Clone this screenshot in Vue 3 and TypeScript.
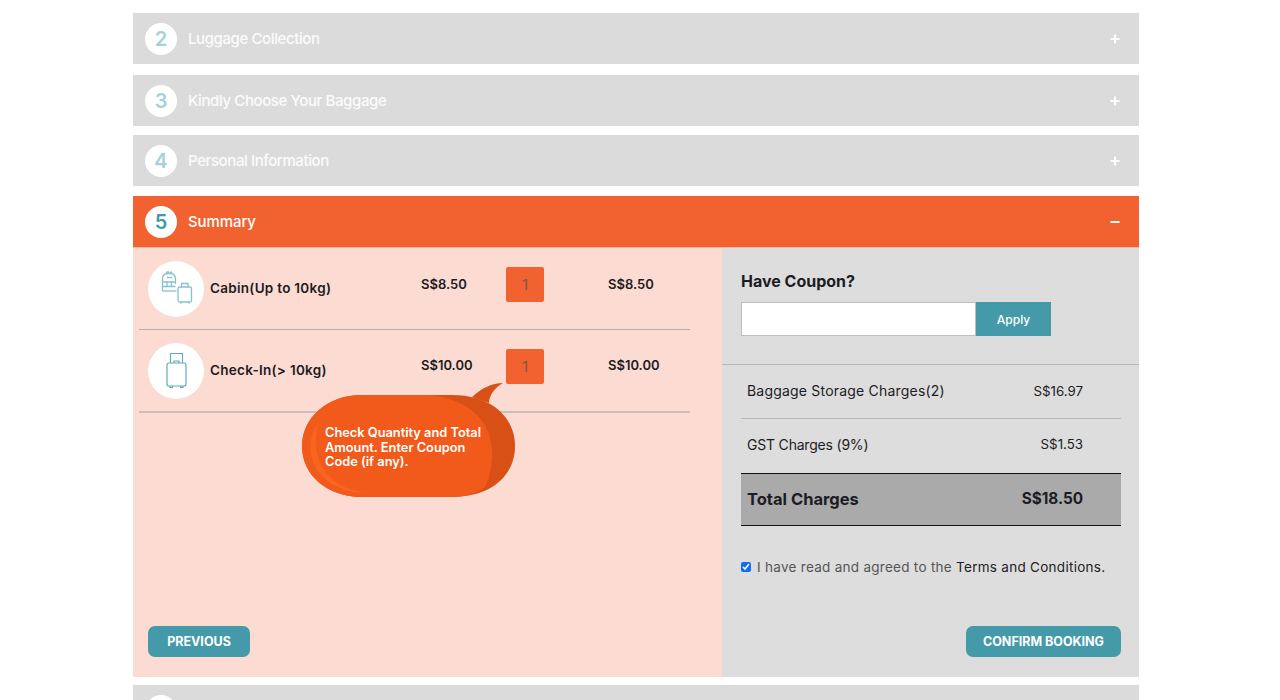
<script setup lang="ts">
interface Step { n: number; title: string; active?: boolean }
const topSteps: Step[] = [
  { n: 2, title: 'Luggage Collection' },
  { n: 3, title: 'Kindly Choose Your Baggage' },
  { n: 4, title: 'Personal Information' },
  { n: 5, title: 'Summary', active: true },
]
const items = [
  { name: 'Cabin(Up to 10kg)', price: 'S$8.50', qty: 1, total: 'S$8.50', kind: 'cabin' },
  { name: 'Check-In(> 10kg)', price: 'S$10.00', qty: 1, total: 'S$10.00', kind: 'check' },
]
</script>

<template>
  <div class="page">
    <section v-for="s in topSteps" :key="s.n" class="step" :class="{ active: s.active }">
      <span class="num">{{ s.n }}</span>
      <span class="title">{{ s.title }}</span>
      <svg class="toggle" width="10" height="10" viewBox="0 0 10 10">
        <rect x="0.5" y="4" width="9" height="2" fill="#fff" />
        <rect v-if="!s.active" x="4" y="0.5" width="2" height="9" fill="#fff" />
      </svg>
    </section>

    <div class="panel">
      <div class="left">
        <div v-for="it in items" :key="it.name" class="row">
          <span class="thumb">
            <svg v-if="it.kind === 'cabin'" width="56" height="56" viewBox="0 0 56 56" fill="none" stroke="#86c2ca" stroke-width="1.300">
              <path d="M14.500 30V18c0-3 2-5 4.500-5.500h4c3 .5 4.500 2.500 4.500 5.500v5" />
              <path d="M14.500 30h14" />
              <path d="M18 13l1-2h1.500l.5 1.500M22 12.500l1-1.500 1 1.500" />
              <path d="M14.500 21h13M14.500 25.500h13M19 21v4.500M23.500 21v4.500" />
              <path d="M19 16.500h5" />
              <rect x="30" y="26" width="13.500" height="15" rx="1.800" />
              <path d="M33.500 26v-3.500h6.500V26" />
              <path d="M33 41v1.800M41 41v1.800" />
            </svg>
            <svg v-else width="56" height="56" viewBox="0 0 56 56" fill="none" stroke="#5fadb9" stroke-width="1.200">
              <rect x="19" y="20" width="19" height="23" rx="2" />
              <path d="M22.500 20V10.500h12V20" />
              <path d="M26 20v-2h5v2" />
              <path d="M22 43v1.500h2.500V43M32.500 43v1.500H35V43" />
            </svg>
          </span>
          <span class="name">{{ it.name }}</span>
          <span class="price">{{ it.price }}</span>
          <span class="qty">{{ it.qty }}</span>
          <span class="total">{{ it.total }}</span>
        </div>

        <div class="bubble">
          <svg width="213" height="114" viewBox="0 0 213 114">
            <path d="M170 14C180 5 190 0 201 0C192 5 187 13 187 20Z" fill="#d95016" />
            <path d="M60 12H150C190 12 213 35 213 63C213 92 190 114 150 114H60C25 114 0 92 0 63C0 35 25 12 60 12Z" fill="#d95016" />
            <path d="M60 12H125C168 15 192 40 190 75C189 88 187 98 182 105C172 111 162 114 150 114H60C25 114 0 92 0 63C0 35 25 12 60 12Z" fill="#f15a1a" />
            <path d="M17 39C6 52 5 75 18 91C30 105 48 110 66 110C47 108 28 100 19 82C13 68 12 52 17 39Z" fill="#f8651f" />
          </svg>
          <p class="bubble-text">Check Quantity and Total Amount. Enter Coupon Code (if any).</p>
        </div>

        <button class="btn prev" type="button">PREVIOUS</button>
      </div>

      <div class="right">
        <div class="coupon">
          <h3>Have Coupon?</h3>
          <div class="coupon-form">
            <input type="text" aria-label="Coupon code" />
            <button type="button">Apply</button>
          </div>
        </div>

        <div class="charges">
          <div class="charge bordered"><span>Baggage Storage Charges(2)</span><span>S$16.97</span></div>
          <div class="charge gst"><span>GST Charges (9%)</span><span>S$1.53</span></div>
          <div class="charge grand"><span>Total Charges</span><span>S$18.50</span></div>
        </div>

        <label class="agree">
          <input type="checkbox" checked />
          <span>I have read and agreed to the <b>Terms and Conditions.</b></span>
        </label>

        <button class="btn confirm" type="button">CONFIRM BOOKING</button>
      </div>
    </div>

    <section class="step next">
      <span class="num"></span>
    </section>
  </div>
</template>

<style>
html, body { margin: 0; background: #fff; overflow: hidden; }
</style>

<style scoped>
.page {
  box-sizing: border-box;
  width: 1006px;
  height: 700px;
  margin: 0 auto 0 133px;
  padding-top: 13px;
  overflow: hidden;
  font-family: Inter, "Liberation Sans", sans-serif;
  color: #1c1c24;
}
.step {
  box-sizing: border-box;
  display: flex;
  align-items: center;
  height: 51px;
  margin-bottom: 10px;
  padding: 0 19px 0 12px;
  background: #dbdbdb;
  color: #fbfbfb;
}
.step:nth-child(1) { margin-bottom: 11px; }
.step:nth-child(2) { margin-bottom: 9px; }
.step.active {
  height: 52px;
  margin-bottom: 0;
  border-bottom: 1px solid #f6b9a3;
  background: #f26230;
  color: #fff;
}
.num {
  flex: none;
  width: 32px;
  height: 32px;
  border-radius: 50%;
  background: #fff;
  color: #a3d2d9;
  font-size: 20px;
  font-weight: 600;
  line-height: 32px;
  text-align: center;
}
.active .num { color: #449aa8; }
.title { margin-left: 11px; font-size: 15px; font-weight: 500; letter-spacing: -0.4px; }
.active .title { letter-spacing: -0.1px; }
.toggle { margin-left: auto; margin-top: 1px; }

.panel {
  display: grid;
  grid-template-columns: 589px 417px;
  height: 429px;
  margin-bottom: 8px;
}
.left {
  position: relative;
  display: flex;
  flex-direction: column;
  padding-left: 6px;
  background: #fcdbd2;
}
.row {
  box-sizing: border-box;
  display: grid;
  grid-template-columns: 62px 211px 85px 102px 1fr;
  align-items: center;
  width: 551px;
  height: 82px;
  padding: 13px 0 12px 9px;
  border-bottom: 1px solid #aab6b6;
  font-size: 13px;
  font-weight: 600;
}
.row:nth-child(2) { height: 83px; padding-bottom: 12px; border-bottom: 2px solid #c9c0bc; }
.row:nth-child(2) .price, .row:nth-child(2) .total { margin-top: 13px; }
.thumb {
  width: 56px;
  height: 56px;
  border-radius: 50%;
  background: #fff;
}
.thumb svg { display: block; }
.name { font-size: 13.500px; letter-spacing: 0.28px; margin-top: -3px; }
.price, .total { align-self: start; margin-top: 14px; line-height: 18px; }
.qty {
  box-sizing: border-box;
  align-self: start;
  width: 38px;
  height: 35px;
  margin-top: 6px;
  border-radius: 2px;
  background: #f26230;
  color: #7a5a48;
  font-size: 15px;
  font-weight: 400;
  line-height: 35px;
  text-align: center;
}
.bubble {
  position: absolute;
  left: 169px;
  top: 135px;
  width: 213px;
  height: 114px;
}
.bubble svg { display: block; }
.bubble-text {
  position: absolute;
  left: 23px;
  top: 43px;
  width: 162px;
  margin: 0;
  color: #fff;
  font-size: 12.800px;
  font-weight: 600;
  line-height: 14.500px;
}
.btn {
  box-sizing: border-box;
  height: 31px;
  border: 0;
  border-radius: 7px;
  background: #449aa8;
  color: #fff;
  font-family: inherit;
  font-size: 12.500px;
  font-weight: 700;
}
.prev { width: 102px; margin-top: auto; margin-bottom: 20px; margin-left: 9px; }

.right {
  display: flex;
  flex-direction: column;
  background: #dddddd;
}
.coupon {
  box-sizing: border-box;
  height: 117px;
  padding: 21px 19px 0;
  border-bottom: 1px solid #b8b8b8;
}
.coupon h3 { margin: 0; font-size: 16px; font-weight: 700; line-height: 24px; }
.coupon-form { display: flex; margin-top: 9px; }
.coupon-form input {
  box-sizing: border-box;
  width: 235px;
  height: 34px;
  border: 1px solid #bdbdbd;
  background: #fff;
  padding: 0;
}
.coupon-form button {
  width: 75px;
  height: 34px;
  border: 0;
  background: #449aa8;
  color: #fff;
  font-family: inherit;
  font-size: 12px;
  font-weight: 500;
}
.charges { margin: 0 18px 0 19px; }
.charge {
  box-sizing: border-box;
  display: flex;
  justify-content: space-between;
  align-items: center;
  height: 54px;
  padding: 0 38px 2px 6px;
  font-size: 14px;
}
.charge span:last-child { font-size: 13.300px; }
.bordered { border-bottom: 1px solid #b8b8b8; letter-spacing: 0.2px; }
.bordered span:last-child { letter-spacing: 0; }
.gst { padding-bottom: 4px; letter-spacing: -0.2px; }
.gst span:last-child { letter-spacing: 0; }
.grand {
  height: 53px;
  border-top: 1px solid #111;
  border-bottom: 1px solid #111;
  background: #aaaaaa;
  font-size: 16.500px;
  font-weight: 700;
}
.grand span:last-child { font-size: 15.300px; }
.agree {
  display: flex;
  align-items: center;
  gap: 6px;
  margin: 31px 0 0 19px;
  color: #555;
  font-size: 13.500px;
  letter-spacing: 0.28px;
  line-height: 20px;
}
.agree input { width: 10px; height: 10px; margin: 0; accent-color: #0b6ef0; }
.agree b { color: #222; font-weight: 400; }
.confirm { align-self: flex-end; width: 155px; margin-top: auto; margin-right: 18px; margin-bottom: 20px; }
.next { margin: 0; align-items: flex-start; padding-top: 10px; }
</style>
